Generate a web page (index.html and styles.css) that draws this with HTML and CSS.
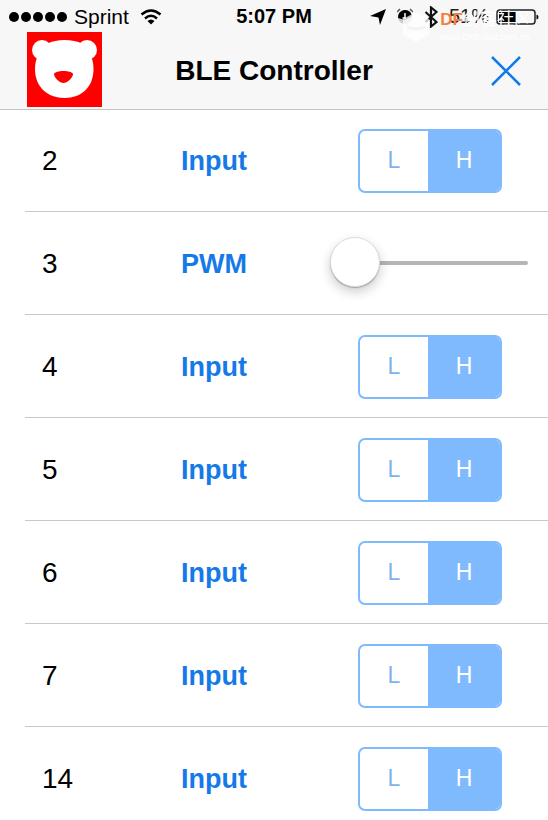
FILE: index.html
```html
<!DOCTYPE html>
<html lang="en">
<head>
  <meta charset="UTF-8">
  <meta name="viewport" content="width=device-width, initial-scale=1.0">
  <title>BLE Controller</title>
  <link rel="stylesheet" href="styles.css">
</head>
<body>
  <header class="header">
    <div class="status-bar">
      <div class="status-left">
        <svg class="signal" width="58" height="10" viewBox="0 0 58 10">
          <circle cx="5" cy="5" r="5"/><circle cx="17" cy="5" r="5"/><circle cx="29" cy="5" r="5"/><circle cx="41" cy="5" r="5"/><circle cx="53" cy="5" r="5"/>
        </svg>
        <span>Sprint</span>
        <svg class="wifi" width="22" height="16" viewBox="0 0 22 16">
          <path d="M1.5 5.5 Q11 -2.5 20.5 5.5M5 9.5 Q11 4 17 9.5" fill="none" stroke="#000" stroke-width="2.4"/>
          <path d="M7.5 12 Q11 9 14.5 12 L11 15.5Z"/>
        </svg>
      </div>
      <span class="time">5:07 PM</span>
      <div class="status-right">
        <svg width="16" height="16" viewBox="0 0 16 16"><path d="M16 0 L10 16 L8.500 8.500 L0 7Z"/></svg>
        <svg class="alarm" width="16" height="18" viewBox="0 0 16 18">
          <circle cx="8" cy="9" r="7" fill="#ccc"/>
          <path d="M1 10a7 7 0 0 1 14-2L8 12Z"/>
          <path d="M0 4 3 1M13 1l3 3" stroke="#555" stroke-width="1.500"/>
          <path d="M8 5v6M5.500 10H8" stroke="#fff" stroke-width="1.500" fill="none"/>
        </svg>
        <svg class="bluetooth" width="14" height="22" viewBox="0 0 14 22">
          <path d="M1.500 6 12.500 16 7 20.500V1.500L12.500 6 1.500 16" fill="none" stroke="#111" stroke-width="2.200"/>
        </svg>
        <span class="percent">51%</span>
        <svg width="43" height="16" viewBox="0 0 43 16">
          <rect x="1" y="1" width="38" height="14" rx="3" fill="none" stroke="#222" stroke-width="1.500"/>
          <path d="M3 3h17v10H3zM40.500 5.500q2 .5 2 2.500t-2 2.500z"/>
        </svg>
      </div>
    </div>
    <nav class="nav-bar">
      <a href="#" class="logo" aria-label="Home">
        <svg width="75" height="75" viewBox="0 0 75 75">
          <rect width="75" height="75" fill="#fe0000"/>
          <g fill="#fff">
            <circle cx="15" cy="18" r="10"/>
            <circle cx="60" cy="18" r="10"/>
            <path d="M20 12C25 9 31 8 37.500 8s13 1 18 4c7 6 11 15 11 25 0 18-12 29-29 29S8 55 8 37c0-10 4-19 12-25Z"/>
          </g>
          <path d="M27 42c1-4 18-4 19 0 0 4-6 9-9.500 9S27 46 27 42Z" fill="#fe0000"/>
        </svg>
      </a>
      <h1>BLE Controller</h1>
      <button type="button" class="close-btn" aria-label="Close">
        <svg width="30" height="30" viewBox="0 0 30 30"><path d="M1 1 29 29M29 1 1 29" stroke="#0f7be8" stroke-width="2.500"/></svg>
      </button>
    </nav>
    <div class="badge">
      <svg width="28" height="32" viewBox="0 0 28 32"><path d="M14 1 27 8v16l-13 7L1 24V8Z" fill="#fff" fill-opacity=".75"/><path d="M5 14q9 5 18 0v3q-9 5-18 0Z" fill="#f3f3f3"/></svg>
      <div class="badge-text">
        <span class="badge-name"><b>DF</b>创客社区</span>
        <span class="badge-url">www.DFRobot.com.cn</span>
      </div>
    </div>
  </header>

  <ul class="pin-list">
    <li class="pin">
      <span>2</span>
      <button type="button" class="mode">Input</button>
      <div class="segment" role="group" aria-label="Pin 2">
        <button type="button" disabled>L</button>
        <button type="button" class="on" disabled>H</button>
      </div>
    </li>
    <li class="pin">
      <label for="pwm3">3</label>
      <button type="button" class="mode">PWM</button>
      <input type="range" id="pwm3" class="slider" min="0" max="255" value="0">
    </li>
    <li class="pin">
      <span>4</span>
      <button type="button" class="mode">Input</button>
      <div class="segment" role="group" aria-label="Pin 4">
        <button type="button" disabled>L</button>
        <button type="button" class="on" disabled>H</button>
      </div>
    </li>
    <li class="pin">
      <span>5</span>
      <button type="button" class="mode">Input</button>
      <div class="segment" role="group" aria-label="Pin 5">
        <button type="button" disabled>L</button>
        <button type="button" class="on" disabled>H</button>
      </div>
    </li>
    <li class="pin">
      <span>6</span>
      <button type="button" class="mode">Input</button>
      <div class="segment" role="group" aria-label="Pin 6">
        <button type="button" disabled>L</button>
        <button type="button" class="on" disabled>H</button>
      </div>
    </li>
    <li class="pin">
      <span>7</span>
      <button type="button" class="mode">Input</button>
      <div class="segment" role="group" aria-label="Pin 7">
        <button type="button" disabled>L</button>
        <button type="button" class="on" disabled>H</button>
      </div>
    </li>
    <li class="pin">
      <span>14</span>
      <button type="button" class="mode">Input</button>
      <div class="segment" role="group" aria-label="Pin 14">
        <button type="button" disabled>L</button>
        <button type="button" class="on" disabled>H</button>
      </div>
    </li>
  </ul>
</body>
</html>
```
FILE: styles.css
```css
* { margin: 0; padding: 0; box-sizing: border-box; }
body {
  background: #fff;
  color: #000;
  font-family: "Liberation Sans", Arial, "Noto Sans CJK SC", sans-serif;
}
svg { display: block; }
button {
  border: none;
  background: none;
  font-family: inherit;
  cursor: pointer;
}

/* header */
.header {
  position: relative;
  background: #f7f7f7;
  box-shadow: 0 1px 0 #c4c4c4;
}
.status-bar {
  display: grid;
  grid-template-columns: 1fr auto 1fr;
  align-items: center;
  height: 32px;
  padding: 1px 9px 0;
  font-size: 21px;
}
.status-left, .status-right {
  display: flex;
  align-items: center;
}
.status-left { gap: 7px; }
.wifi { margin-left: 4px; }
.time { font-weight: bold; font-size: 20px; }
.status-right {
  justify-content: flex-end;
  gap: 11px;
}
.percent { font-size: 20px; color: #222; }
.percent + svg { margin-left: -4px; }
.nav-bar {
  display: grid;
  grid-template-columns: 1fr auto 1fr;
  align-items: center;
  height: 77px;
  padding: 0 27px;
}
.nav-bar h1 { font-size: 28px; }
.logo { justify-self: start; align-self: start; }
.close-btn { justify-self: end; }

/* community badge over the status bar */
.badge {
  position: absolute;
  top: 9px;
  right: 17px;
  display: flex;
  gap: 10px;
  color: #fff;
  pointer-events: none;
}
.badge svg { margin-top: 2px; }
.badge-text { display: flex; flex-direction: column; }
.badge-name {
  font-size: 17px;
  line-height: 22px;
}
.badge-name b { color: #f5803e; }
.badge-url { font-size: 9px; line-height: 12px; }

/* pins */
.pin-list { list-style: none; }
.pin {
  display: grid;
  grid-template-columns: 98px 1fr 240px;
  align-items: center;
  height: 103px;
  margin-left: 25px;
  padding: 2px 20px 0 17px;
  border-bottom: 1px solid #c8c8c8;
  font-size: 28px;
}
.mode {
  color: #1579e8;
  font-size: 27px;
  font-weight: bold;
}
.segment {
  display: flex;
  justify-self: end;
  width: 144px;
  height: 64px;
  margin-right: 26px;
  border: 2px solid #7fbaff;
  border-radius: 7px;
  background: #fff;
  overflow: hidden;
}
.segment button {
  flex: 1;
  color: #7fb3ee;
  font-size: 23px;
  padding-bottom: 2px;
}
.segment .on { flex: 0 0 72px; background: #7fbaff; color: #fff; }
.slider {
  justify-self: end;
  width: 198px;
  height: 50px;
  margin-bottom: 2px;
  background: transparent;
  appearance: none;
  -webkit-appearance: none;
}
.slider::-webkit-slider-runnable-track {
  height: 4px;
  border-radius: 2px;
  background: #b5b5b5;
}
.slider::-webkit-slider-thumb {
  -webkit-appearance: none;
  width: 50px;
  height: 50px;
  margin-top: -24px;
  border: 1px solid #ddd;
  border-radius: 50%;
  background: #fff;
  box-shadow: 0 5px 12px rgba(0, 0, 0, 0.2), 0 1px 1px rgba(0, 0, 0, 0.25);
}
```
